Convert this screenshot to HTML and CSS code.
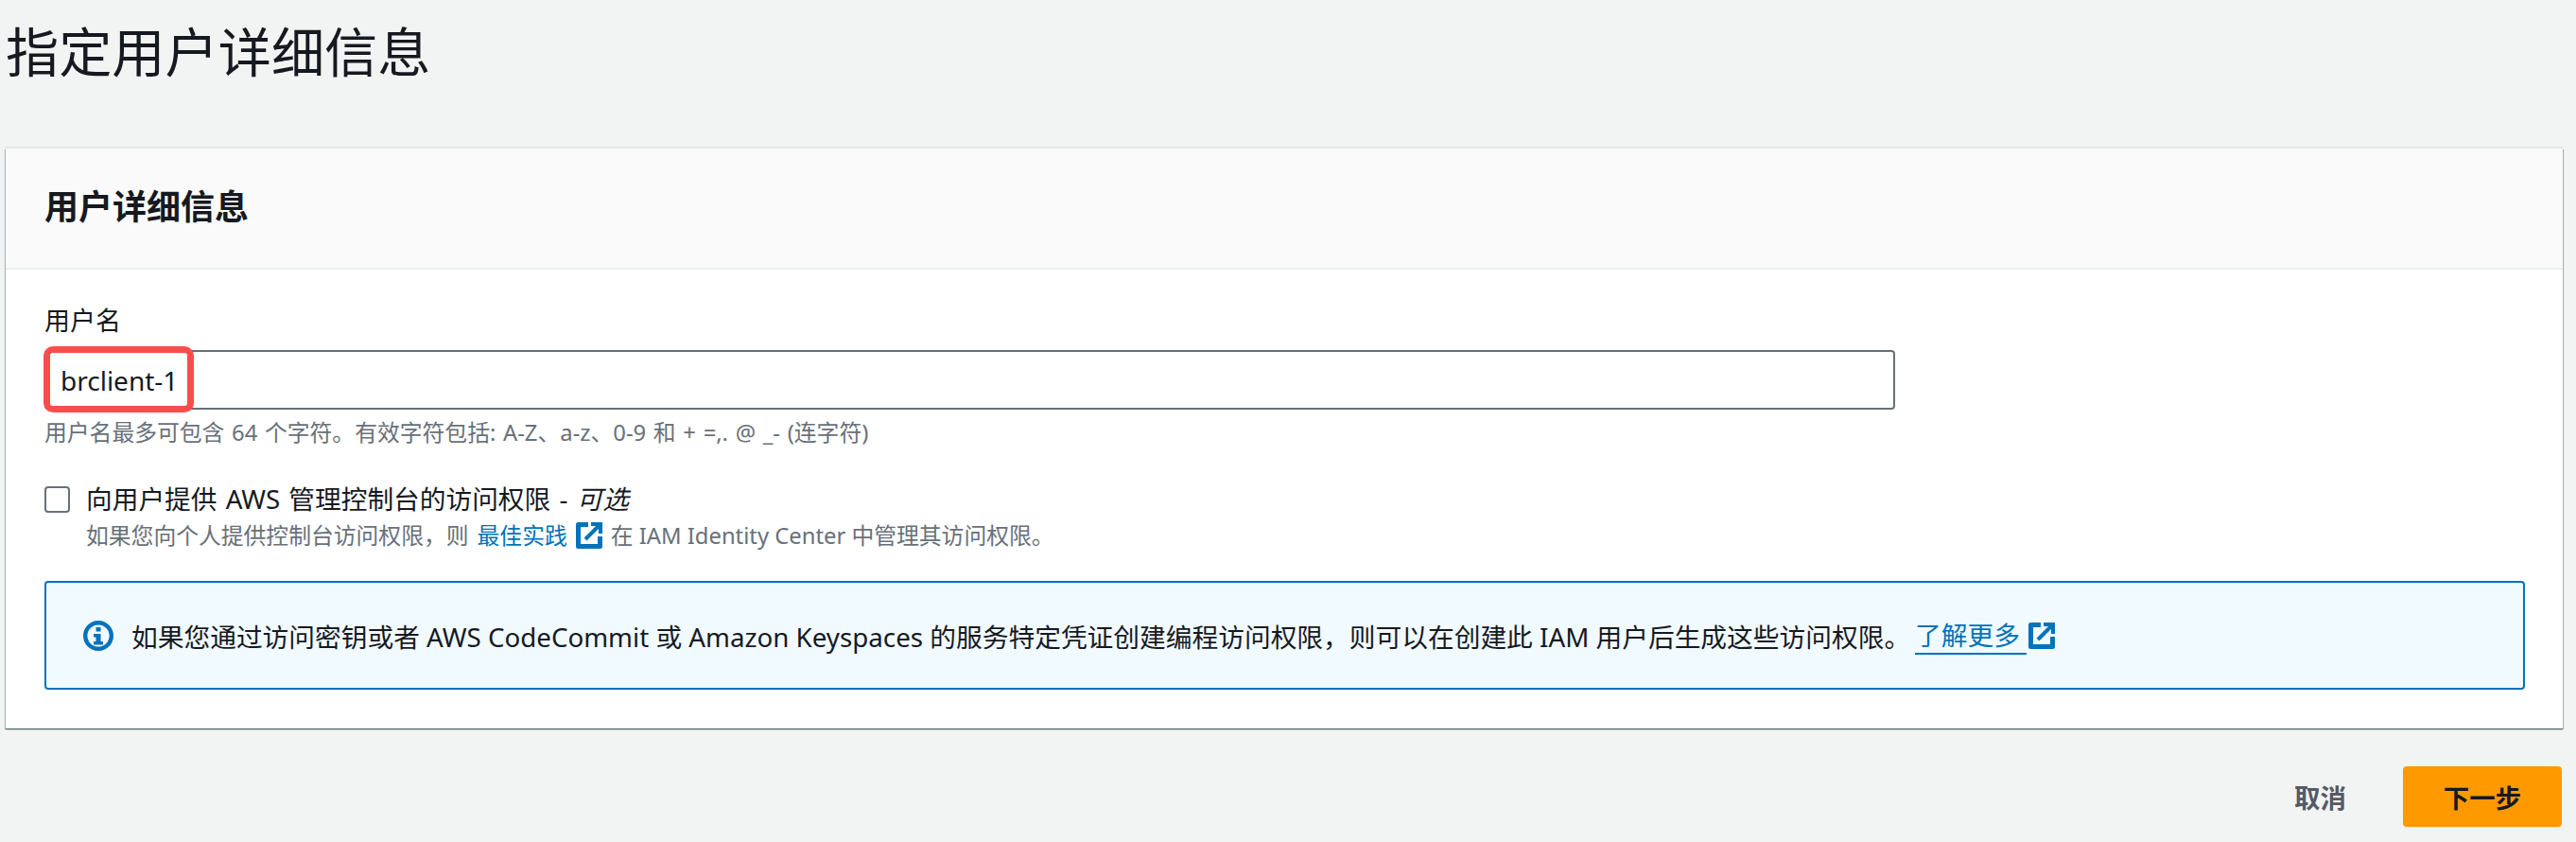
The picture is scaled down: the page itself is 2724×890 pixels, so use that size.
FILE: index.html
```html
<!DOCTYPE html>
<html lang="zh-CN">
<head>
<meta charset="utf-8">
<title>指定用户详细信息</title>
<link rel="stylesheet" href="styles.css">
</head>
<body>
<h1 class="page-title">指定用户详细信息</h1>
<section class="card">
  <header class="card-header"><h2>用户详细信息</h2></header>
  <div class="card-body">
    <label class="field-label" for="username">用户名</label>
    <div class="input-wrap">
      <input id="username" class="text-input" type="text" value="brclient-1">
      <span class="highlight"></span>
    </div>
    <p class="hint">用户名最多可包含 64 个字符。有效字符包括: A-Z、a-z、0-9 和 + =,. @ _- (连字符)</p>
    <div class="check-row">
      <span class="checkbox"></span>
      <div class="check-text">
        <div class="check-title">向用户提供 AWS 管理控制台的访问权限 - <em>可选</em></div>
        <div class="check-sub">如果您向个人提供控制台访问权限，则 <a class="link">最佳实践</a>
          <svg class="ext" viewBox="0 0 28 28"><path d="M13 2.5H2.5v23h23V15" fill="none" stroke="#0073bb" stroke-width="5" stroke-linejoin="round"/><path d="M16 2h10v10M25.5 2.5 10 18" fill="none" stroke="#0073bb" stroke-width="4"/></svg>
          在 IAM Identity Center 中管理其访问权限。</div>
      </div>
    </div>
    <div class="alert">
      <svg class="info" viewBox="0 0 32 32"><circle cx="16" cy="16" r="13.8" fill="none" stroke="#0073bb" stroke-width="4.4"/><path d="M13.5 7h5v4.5h-5zM11 14h7.5v8H21v3.5H11V22h2.5v-4.5H11z" fill="#0073bb"/></svg>
      <span class="alert-text">如果您通过访问密钥或者 AWS CodeCommit 或 Amazon Keyspaces 的服务特定凭证创建编程访问权限，则可以在创建此 IAM 用户后生成这些访问权限。</span>
      <a class="link underlined">了解更多 </a>
      <svg class="ext ext-alert" viewBox="0 0 28 28"><path d="M13 2.5H2.5v23h23V15" fill="none" stroke="#0073bb" stroke-width="5" stroke-linejoin="round"/><path d="M16 2h10v10M25.5 2.5 10 18" fill="none" stroke="#0073bb" stroke-width="4"/></svg>
    </div>
  </div>
</section>
<footer class="actions">
  <button class="btn-cancel" type="button">取消</button>
  <button class="btn-next" type="button">下一步</button>
</footer>
</body>
</html>
```
FILE: styles.css
```css
* { box-sizing: border-box; }
html, body { margin: 0; padding: 0; }
body {
  width: 2724px;
  height: 890px;
  overflow: hidden;
  background: #f2f3f3;
  color: #16191f;
  font-family: "Noto Sans", "Noto Sans CJK SC", sans-serif;
  padding: 0 14px 0 6px;
}
.page-title {
  margin: 0;
  height: 157px;
  padding: 15px 0 0 0;
  font-family: "Noto Sans CJK SC", sans-serif;
  font-size: 56.2px;
  line-height: 74px;
  font-weight: 400;
}
.card {
  background: #fff;
  height: 613px;
  box-shadow: 0 -2px 1px 0 rgba(0,28,36,.05), 0 1px 1px 0 rgba(0,28,36,.5), 1px 1px 1px 0 rgba(0,28,36,.22), -1px 1px 1px 0 rgba(0,28,36,.22);
}
.card-header {
  height: 128px;
  background: #fafafa;
  border-bottom: 2px solid #eaeded;
  padding: 0 41px 8px;
  display: flex;
  align-items: center;
}
.card-header h2 {
  margin: 0;
  font-family: "Noto Sans CJK SC", sans-serif;
  font-size: 36px;
  line-height: 48px;
  font-weight: 700;
}
.card-body { padding: 33px 40px 0 41px; }
.field-label {
  display: block;
  font-family: "Noto Sans CJK SC", sans-serif;
  font-size: 27px;
  line-height: 40px;
  margin-bottom: 12px;
}
.input-wrap { position: relative; width: 1957px; height: 63px; }
.text-input {
  display: block;
  width: 100%;
  height: 100%;
  border: 2px solid #687078;
  border-radius: 4px;
  background: #fff;
  color: #16191f;
  font-family: "Noto Sans", sans-serif;
  font-size: 28px;
  padding: 0 15px;
  outline: none;
}
.highlight {
  position: absolute;
  left: -1px;
  top: -4px;
  width: 159px;
  height: 70px;
  border: 7px solid #fa4d4b;
  border-radius: 10px;
}
.hint {
  margin: 8px 0 0;
  font-size: 23.8px;
  line-height: 32px;
  color: #687078;
  word-spacing: 1.5px;
}
.check-row { display: flex; gap: 17px; margin-top: 36px; }
.checkbox {
  flex: none;
  width: 27px;
  height: 28px;
  margin-top: 5px;
  border: 2px solid #687078;
  border-radius: 4px;
  background: #fff;
}
.check-title { font-size: 27.7px; line-height: 36px; word-spacing: 2px; }
.check-title em { font-style: italic; }
.check-sub { font-size: 23.8px; line-height: 32px; color: #687078; display: flex; align-items: center; gap: 9px; margin-top: 5px; }
.link { color: #0073bb; }
.ext { width: 28px; height: 28px; flex: none; }
.alert {
  margin-top: 32px;
  width: 2623px;
  height: 115px;
  background: #f1faff;
  border: 2px solid #0073bb;
  border-radius: 4px;
  display: flex;
  align-items: center;
  padding-left: 39px;
  font-size: 27.73px;
}
.info { width: 32px; height: 32px; flex: none; margin-right: 19px; }
.alert-text { white-space: nowrap; }
.underlined {
  margin-left: 5px;
  border-bottom: 2px solid #0073bb;
  white-space: pre;
  line-height: 38px;
}
.ext-alert { margin-left: 2px; }
.actions {
  display: flex;
  justify-content: flex-end;
  align-items: center;
  margin-top: 40px;
  padding-right: 1px;
}
.actions button {
  border: 0;
  font-family: "Noto Sans CJK SC", sans-serif;
  font-size: 27.5px;
  font-weight: 700;
  cursor: pointer;
}
.btn-cancel { background: transparent; color: #545b64; padding: 0; margin-right: 60px; }
.btn-next { width: 168px; height: 64px; background: #ff9900; color: #16191f; border-radius: 4px; padding: 0; }
```
